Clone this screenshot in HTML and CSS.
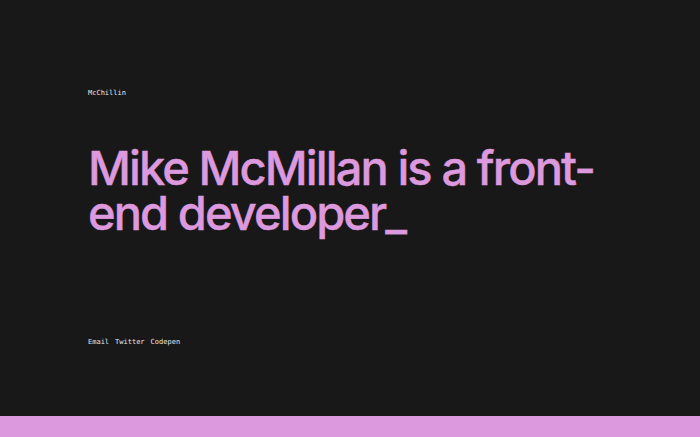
FILE: index.html
```html
<!DOCTYPE html>
<html>
<head>
<meta charset="utf-8">
<link rel="stylesheet" href="styles.css">
</head>
<body>
<div class="page">
  <header class="top">McChillin</header>
  <main class="hero">
    <h1 class="title">Mike McMillan is a front-<br>end developer_</h1>
  </main>
  <footer class="links">
    <a class="link">Email</a>
    <a class="link">Twitter</a>
    <a class="link">Codepen</a>
  </footer>
</div>
<div class="band"></div>
</body>
</html>
```
FILE: styles.css
```css
html, body {
  margin: 0;
  padding: 0;
  background: #181818;
  height: 437px;
  overflow: hidden;
}
.page {
  height: 416px;
  box-sizing: border-box;
  padding: 88px 0 0 88px;
  display: flex;
  flex-direction: column;
}
.top {
  font-family: "DejaVu Sans Mono", monospace;
  font-size: 7px;
  line-height: 10px;
  color: #e8e8e8;
}
.hero {
  padding-top: 47px;
}
.title {
  margin: 0;
  white-space: nowrap;
  font-family: Inter, sans-serif;
  font-weight: 500;
  font-size: 47px;
  line-height: 45px;
  letter-spacing: -1.9px;
  color: #dd99dd;
  -webkit-text-stroke: 0.4px #dd99dd;
}
.links {
  margin-top: 102px;
  display: flex;
  gap: 6px;
  font-family: "DejaVu Sans Mono", monospace;
  font-size: 7px;
  line-height: 10px;
  color: #e8e8e8;
}
.band {
  height: 21px;
  background: #dd99dd;
}
```
